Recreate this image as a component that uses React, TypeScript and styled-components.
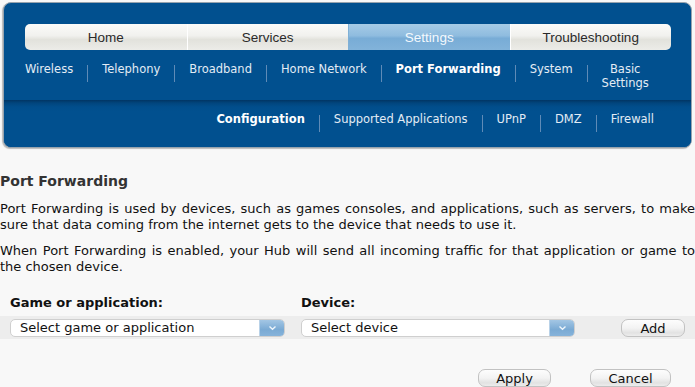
import React from 'react';
import styled, { createGlobalStyle } from 'styled-components';

const GlobalStyle = createGlobalStyle`
  html, body {
    margin: 0;
    padding: 0;
    background: #f8f8f8;
    font-family: "DejaVu Sans", Verdana, sans-serif;
    color: #111;
    overflow: hidden;
  }
`;

const Page = styled.div`
  width: 695px;
  height: 387px;
  padding-top: 2px;
  box-sizing: border-box;
`;

const Header = styled.div`
  margin: 0 3px 0 3px;
  border: 1px solid #97a3ae;
  border-radius: 8px;
  background: #01508f;
  overflow: hidden;
  box-shadow: -1px 1px 1px rgba(0, 0, 0, 0.25);
`;

const TopSection = styled.div`
  height: 97px;
  padding: 21px 20px 0 21px;
  box-sizing: border-box;
`;

const Tabs = styled.div`
  display: grid;
  grid-template-columns: repeat(4, 1fr);
  height: 26px;
  border-radius: 5px;
  overflow: hidden;
`;

const Tab = styled.div<{ $active?: boolean }>`
  display: flex;
  align-items: center;
  justify-content: center;
  font-family: "Liberation Sans", Arial, sans-serif;
  font-size: 13.5px;
  color: ${(p) => (p.$active ? '#f4f9fd' : '#2a2a2a')};
  background: ${(p) =>
    p.$active
      ? 'linear-gradient(#a6cbe6 0%, #8fbcdf 45%, #78acd6 55%, #82b3da 100%)'
      : 'linear-gradient(#fbfbf9 0%, #f1f1ee 45%, #e2e2dc 60%, #ececE8 100%)'};
  border-left: 1px solid ${(p) => (p.$active ? '#7fb0d6' : '#fff')};
  &:first-child {
    border-left: none;
  }
`;

const SubNav = styled.div<{ $right?: boolean }>`
  display: flex;
  justify-content: ${(p) => (p.$right ? 'flex-end' : 'flex-start')};
  align-items: flex-start;
`;

const TopNav = styled(SubNav)`
  margin-top: 12px;
  padding-left: 0;
`;

const NavItem = styled.div<{ $bold?: boolean }>`
  font-size: 11.5px;
  line-height: 14px;
  color: ${(p) => (p.$bold ? '#fff' : '#e3ecf5')};
  font-weight: ${(p) => (p.$bold ? 'bold' : 'normal')};
  padding: 0 14px;
  text-align: center;
  &:first-child {
    padding-left: 0;
  }
  &:last-child {
    padding-right: 0;
  }
`;

const Sep = styled.div`
  width: 1px;
  height: 17px;
  margin-top: 3px;
  background: #5f8bb7;
`;

const LowerSection = styled.div`
  height: 47px;
  padding: 12px 37px 0 0;
  box-sizing: border-box;
  background: linear-gradient(#013563 0px, #01457d 3px, #014e8c 7px, #01508f 12px);
`;

const Content = styled.div`
  padding-top: 25px;
`;

const Heading = styled.h2`
  margin: 0 0 11px;
  font-size: 14px;
  font-weight: bold;
  color: #333;
  line-height: 17px;
`;

const Para = styled.p`
  margin: 0 0 10px;
  font-size: 13px;
  line-height: 16px;
  text-align: justify;
  color: #111;
  width: 695px;
`;

const Labels = styled.div`
  display: flex;
  margin-top: 20px;
  padding-left: 10px;
  height: 17px;
`;

const Label = styled.div<{ $w: number }>`
  width: ${(p) => p.$w}px;
  font-size: 13px;
  font-weight: bold;
  line-height: 16px;
`;

const Band = styled.div`
  display: flex;
  align-items: center;
  height: 23px;
  margin-top: 4px;
  padding-left: 10px;
  background: #ededed;
`;

const Select = styled.div<{ $w: number }>`
  display: flex;
  width: ${(p) => p.$w}px;
  height: 18px;
  box-sizing: border-box;
  border: 1px solid #cfcfcf;
  border-radius: 5px;
  background: #fff;
  overflow: hidden;
`;

const SelectText = styled.div`
  flex: 1;
  font-size: 13px;
  line-height: 16px;
  padding-left: 9px;
  color: #111;
`;

const SelectButton = styled.div`
  width: 24px;
  display: flex;
  align-items: center;
  justify-content: center;
  background: linear-gradient(#a3c6e4, #7aaad4 60%, #86b3da);
  border-left: 1px solid #b9d2e8;
`;

const Button = styled.div<{ $w: number }>`
  width: ${(p) => p.$w}px;
  height: 18px;
  box-sizing: border-box;
  border: 1px solid #c2c2c2;
  border-radius: 7px;
  background: linear-gradient(#fdfdfd 0%, #f3f3f3 50%, #e2e2e2 80%, #ededed 100%);
  font-size: 13px;
  line-height: 17px;
  text-align: center;
  color: #111;
`;

const Actions = styled.div`
  display: flex;
  justify-content: flex-end;
  gap: 39px;
  margin-top: 30px;
  padding-right: 24px;
`;

const Chevron = () => (
  <svg width="9" height="6" viewBox="0 0 9 6">
    <path d="M1.5 1.5 L4.5 4.2 L7.5 1.5" fill="none" stroke="#eef5fb" strokeWidth="1.4" />
  </svg>
);

const topItems = ['Wireless', 'Telephony', 'Broadband', 'Home Network', 'Port Forwarding', 'System'];
const lowerItems = ['Configuration', 'Supported Applications', 'UPnP', 'DMZ', 'Firewall'];

export default function App() {
  return (
    <Page>
      <GlobalStyle />
      <Header>
        <TopSection>
          <Tabs>
            <Tab>Home</Tab>
            <Tab>Services</Tab>
            <Tab $active>Settings</Tab>
            <Tab>Troubleshooting</Tab>
          </Tabs>
          <TopNav>
            {topItems.map((t) => (
              <React.Fragment key={t}>
                <NavItem $bold={t === 'Port Forwarding'}>{t}</NavItem>
                <Sep />
              </React.Fragment>
            ))}
            <NavItem>
              Basic
              <br />
              Settings
            </NavItem>
          </TopNav>
        </TopSection>
        <LowerSection>
          <SubNav $right>
            {lowerItems.map((t, i) => (
              <React.Fragment key={t}>
                {i > 0 && <Sep />}
                <NavItem $bold={i === 0}>{t}</NavItem>
              </React.Fragment>
            ))}
          </SubNav>
        </LowerSection>
      </Header>
      <Content>
        <Heading>Port Forwarding</Heading>
        <Para>
          Port Forwarding is used by devices, such as games consoles, and applications, such as servers, to make
          sure that data coming from the internet gets to the device that needs to use it.
        </Para>
        <Para>
          When Port Forwarding is enabled, your Hub will send all incoming traffic for that application or game to
          the chosen device.
        </Para>
        <Labels>
          <Label $w={291}>Game or application:</Label>
          <Label $w={200}>Device:</Label>
        </Labels>
        <Band>
          <Select $w={275} style={{ marginRight: 16 }}>
            <SelectText>Select game or application</SelectText>
            <SelectButton>
              <Chevron />
            </SelectButton>
          </Select>
          <Select $w={274} style={{ marginRight: 46 }}>
            <SelectText>Select device</SelectText>
            <SelectButton>
              <Chevron />
            </SelectButton>
          </Select>
          <Button $w={64}>Add</Button>
        </Band>
        <Actions>
          <Button $w={73}>Apply</Button>
          <Button $w={81}>Cancel</Button>
        </Actions>
      </Content>
    </Page>
  );
}
